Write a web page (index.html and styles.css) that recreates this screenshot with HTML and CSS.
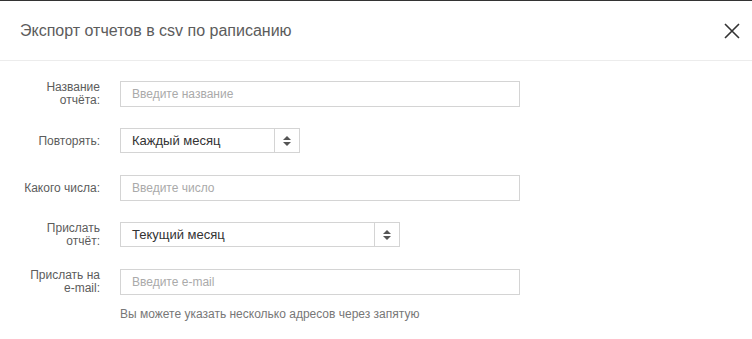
FILE: index.html
```html
<!DOCTYPE html>
<html lang="ru">
<head>
  <meta charset="UTF-8" />
  <meta name="viewport" content="width=device-width, initial-scale=1.0"/>
  <title>Экспорт отчетов</title>
  <link rel="stylesheet" href="styles.css">
</head>
<body>
<div class="modal">
  <div class="modal-header">
    <div class="modal-title">Экспорт отчетов в csv по раписанию</div>
    <button class="close-btn" type="button" aria-label="Закрыть">
      <svg width="16" height="16" viewBox="0 0 16 16">
        <path d="M1 1 L15 15 M15 1 L1 15" stroke="#333" stroke-width="1.6" fill="none"/>
      </svg>
    </button>
  </div>

  <form class="form">
    <label class="label">Название<br>отчёта:</label>
    <input class="field" type="text" placeholder="Введите название">

    <label class="label">Повторять:</label>
    <div class="select select-short">
      <span class="select-value">Каждый месяц</span>
      <span class="select-arrow"><i class="up"></i><i class="down"></i></span>
    </div>

    <label class="label">Какого числа:</label>
    <input class="field" type="text" placeholder="Введите число">

    <label class="label">Прислать<br>отчёт:</label>
    <div class="select select-mid">
      <span class="select-value">Текущий месяц</span>
      <span class="select-arrow"><i class="up"></i><i class="down"></i></span>
    </div>

    <label class="label">Прислать на<br>e-mail:</label>
    <div class="field-wrap">
      <input class="field" type="text" placeholder="Введите e-mail">
      <div class="hint">Вы можете указать несколько адресов через запятую</div>
    </div>
  </form>
</div>
</body>
</html>
```

FILE: styles.css
```css
body {
  margin: 0;
  background: #fff;
  font-family: "Liberation Sans", Arial, sans-serif;
  color: #555;
}

.modal {
  border-top: 1px solid #333;
}

.modal-header {
  height: 59px;
  display: flex;
  align-items: center;
  justify-content: space-between;
  padding: 0 12px 0 20px;
  border-bottom: 1px solid #ececec;
}

.modal-title {
  font-size: 16px;
  color: #5c5c5c;
}

.close-btn {
  border: none;
  background: none;
  padding: 0;
  width: 16px;
  height: 16px;
  cursor: pointer;
}

.form {
  display: grid;
  grid-template-columns: 100px 400px;
  column-gap: 20px;
  row-gap: 21px;
  padding-top: 20px;
  align-items: start;
}

.label {
  text-align: right;
  font-size: 12px;
  line-height: 13px;
  color: #5c5c5c;
  min-height: 26px;
  display: flex;
  align-items: center;
  justify-content: flex-end;
}

.field {
  box-sizing: border-box;
  width: 400px;
  height: 26px;
  border: 1px solid #d4d4d4;
  padding: 0 11px;
  font-family: inherit;
  font-size: 12px;
  color: #333;
  outline: none;
  margin: 0;
  display: block;
}

.field::placeholder {
  color: #aaa;
}

.select {
  box-sizing: border-box;
  height: 25px;
  border: 1px solid #d4d4d4;
  display: flex;
  align-items: center;
  font-size: 13px;
  color: #333;
}

.select-short {
  width: 180px;
}

.select-mid {
  width: 280px;
}

.select-value {
  flex: 1;
  padding-left: 11px;
}

.select-arrow {
  width: 24px;
  height: 100%;
  border-left: 1px solid #d4d4d4;
  display: flex;
  flex-direction: column;
  align-items: center;
  justify-content: center;
  gap: 2px;
}

.select-arrow i {
  width: 0;
  height: 0;
  border-left: 4px solid transparent;
  border-right: 4px solid transparent;
}

.select-arrow .up {
  border-bottom: 4px solid #555;
}

.select-arrow .down {
  border-top: 4px solid #555;
}

.hint {
  margin-top: 12px;
  font-size: 12px;
  color: #777;
}
```
